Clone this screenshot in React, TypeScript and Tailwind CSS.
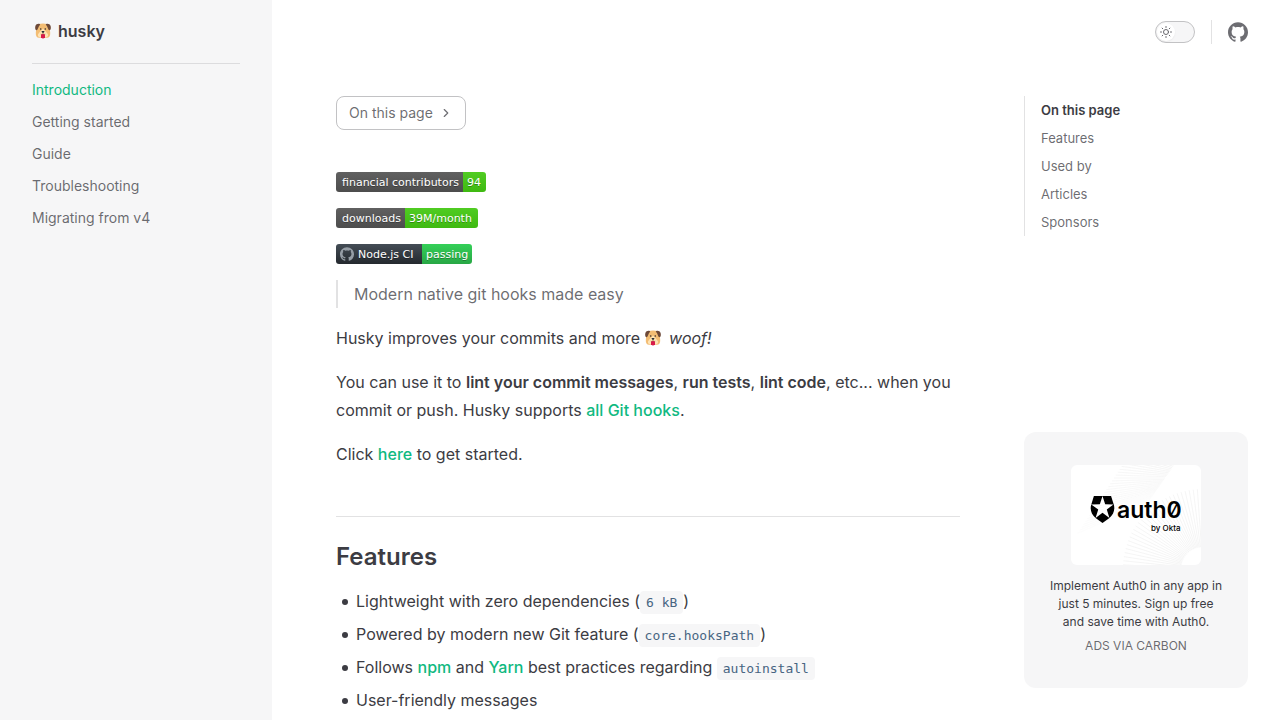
import React, { useState } from "react";
import { SiAuth0, SiGithub } from "react-icons/si";

const sidebarLinks = ["Introduction", "Getting started", "Guide", "Troubleshooting", "Migrating from v4"];
const outline = ["Features", "Used by", "Articles", "Sponsors"];

function DogFace({ className }: { className: string }) {
  return (
    <svg viewBox="0 0 16 16" className={className} role="img" aria-label="dog face">
      <path d="M3.500 1.200C6 .4 10 .4 12.500 1.200C14.500 3 15 7 15.200 10c.2 3-1 4.600-3.200 4.800H4C1.800 14.600.6 13 .8 10C1 7 1.500 3 3.500 1.200z" fill="#f3bd74" />
      <path d="M8 5.500C6.300 7 5 9 3.600 10.500c-1.300 1.500-.6 3.700 1.400 3.700h6c2 0 2.700-2.200 1.400-3.700C11 9 9.700 7 8 5.500z" fill="#ffe3b3" />
      <path d="M4.800.9C3 .3 1 1 .4 3C-.1 5 .2 7 1.500 7.200C3.300 7.200 3 3.400 5.200 1.800zM11.200.9C13 .3 15 1 15.600 3c.5 2 .2 4-1.100 4.200C12.700 7.200 13 3.400 10.800 1.800z" fill="#6d4938" />
      <circle cx="5.700" cy="6" r=".8" fill="#332b2b" />
      <circle cx="10.300" cy="6" r=".8" fill="#332b2b" />
      <path d="M6.500 8h3L8.800 9.800H7.200z" fill="#292f33" />
      <path d="M8 9.500v1.600M5.800 11.200Q7 12 8 11.200Q9 12 10.200 11.200" stroke="#6b4c35" strokeWidth=".6" fill="none" />
      <path d="M6 11.700Q8 10.400 10 11.700v2.500Q8 17 6 14.200z" fill="#d81b4a" />
    </svg>
  );
}

function Badge({ label, value, labelClass, valueClass, icon }: {
  label: string; value: string; labelClass: string; valueClass: string; icon?: boolean;
}) {
  return (
    <a
      href="#"
      className="flex h-5 w-fit overflow-hidden rounded-[3px] font-['DejaVu_Sans',sans-serif] text-[11px] leading-[18px] whitespace-nowrap text-white [text-shadow:0_1px_0_rgba(1,1,1,0.3)]"
    >
      <span className={`flex gap-1 bg-linear-to-b ${labelClass}`}>
        {icon && <SiGithub className="mt-[3px] size-3.5 shrink-0 text-[#959da5]" />}
        <span className="pt-0.5">{label}</span>
      </span>
      <span className={`bg-linear-to-b pt-0.5 pl-1 ${valueClass}`}>{value}</span>
    </a>
  );
}

function Link({ children }: { children: React.ReactNode }) {
  return <a href="#" className="font-medium text-[#10b981]">{children}</a>;
}

function Code({ children }: { children: React.ReactNode }) {
  return (
    <code className="rounded bg-[#f6f6f7] px-1.5 py-1 font-['DejaVu_Sans_Mono',monospace] text-[13px] leading-4 text-[#476582]">
      {children}
    </code>
  );
}

function Item({ children }: { children: React.ReactNode }) {
  return (
    <li className="flex items-center gap-2 pl-1.5">
      <span className="size-1.5 shrink-0 rounded-full bg-[#3c3c43]" />
      <span>{children}</span>
    </li>
  );
}

function AdArtwork() {
  const rays = Array.from({ length: 30 }, (_, i) => i);
  return (
    <svg viewBox="0 0 130 100" className="h-[100px] w-[130px] rounded-md bg-white" role="img" aria-label="auth0 by Okta">
      <g stroke="#efefef" strokeWidth=".6">
        {rays.map((i) => (
          <line key={`u${i}`} x1={103 - i * 0.9} y1={i * 1.3} x2={62 - i * 1.9} y2={-16 + i * 2.9} opacity={1 - i / 36} />
        ))}
        {rays.map((i) => {
          const a = (i / 29) * 1.5;
          return <line key={`l${i}`} x1={132 - Math.cos(a) * 22} y1={104 - Math.sin(a) * 22} x2={132 - Math.cos(a) * 80} y2={104 - Math.sin(a) * 80} />;
        })}
      </g>
      <SiAuth0 x="18" y="31" size={27} color="#000" />
      <text x="46" y="53" fontSize="23" fontWeight="600" className="font-['Inter',sans-serif] [font-feature-settings:'zero']">auth0</text>
      <text x="80" y="66" fontSize="8" fontWeight="500" className="font-['Inter',sans-serif]">by Okta</text>
    </svg>
  );
}

export default function App() {
  const [dark, setDark] = useState(false);
  return (
    <div className="flex min-h-screen bg-white font-['Inter',sans-serif] text-base text-[#3c3c43]">
      <aside className="w-[272px] shrink-0 bg-[#f6f6f7] px-8">
        <a href="#" className="flex h-16 items-center border-b border-[#dcdcde] pb-px font-semibold">
          <DogFace className="mr-[7px] ml-[3px] size-4" />
          <span>husky</span>
        </a>
        <nav aria-label="Sidebar" className="flex flex-col pt-2.5 text-sm">
          {sidebarLinks.map((name, i) => (
            <a key={name} href="#" className={`py-1 leading-6 ${i === 0 ? "text-[#10b981]" : "text-[#3c3c43]/75"}`}>{name}</a>
          ))}
        </nav>
      </aside>

      <div className="flex min-w-0 grow flex-col">
        <header className="flex h-16 shrink-0 items-center justify-end px-8 pb-px">
          <button
            type="button"
            role="switch"
            aria-checked={dark}
            aria-label="toggle dark mode"
            onClick={() => setDark(!dark)}
            className="flex h-[22px] w-10 items-center rounded-full border border-[#c2c2c4] bg-[#f6f6f7] px-px"
          >
            <span className="flex size-[18px] items-center justify-center rounded-full bg-white shadow-xs">
              <svg viewBox="0 0 24 24" className="size-3" fill="none" stroke="#66666c" strokeWidth="2" strokeLinecap="round">
                <circle cx="12" cy="12" r="5" />
                <path d="M12 1v2M12 21v2M1 12h2M21 12h2M4.200 4.200l1.400 1.400M18.400 18.400l1.400 1.400M4.200 19.800l1.400-1.400M18.400 5.600l1.400-1.400" />
              </svg>
            </span>
          </button>
          <span className="mx-4 h-6 w-px bg-[#e2e2e3]" />
          <a href="#" aria-label="GitHub"><SiGithub className="size-5 text-[#3c3c43]/75" /></a>
        </header>

        <div className="flex grow gap-16 pt-8 pr-8 pl-16">
          <main className="min-w-0 flex-1">
            <button type="button" className="flex items-center gap-1.5 rounded-lg border border-[#c2c2c4] px-3 py-1 text-sm leading-6 text-[#3c3c43]/75">
              On this page
              <svg viewBox="0 0 24 24" className="size-3.5" fill="none" stroke="currentColor" strokeWidth="2" strokeLinecap="round" strokeLinejoin="round">
                <path d="m9 18 6-6-6-6" />
              </svg>
            </button>

            <div className="mt-[42px] flex flex-col gap-4 leading-7">
              <Badge label="financial contributors" value="94" labelClass="w-[127px] pl-1.5 from-[#606060] to-[#4d4d4d]" valueClass="w-[23px] from-[#50cc22] to-[#3fb911]" />
              <Badge label="downloads" value="39M/month" labelClass="w-[69px] pl-1.5 from-[#606060] to-[#4d4d4d]" valueClass="w-[73px] from-[#50cc22] to-[#3fb911]" />
              <Badge icon label="Node.js CI" value="passing" labelClass="w-[86px] pl-1 from-[#444d56] to-[#24292e]" valueClass="w-[50px] from-[#34d058] to-[#28a745]" />
              <blockquote className="border-l-2 border-[#e2e2e3] pl-4 text-[#3c3c43]/75">Modern native git hooks made easy</blockquote>
              <p>
                Husky improves your commits and more <DogFace className="mr-1 inline-block size-4 align-[-2px]" /> <em>woof!</em>
              </p>
              <p>
                You can use it to <strong className="font-semibold">lint your commit messages</strong>, <strong className="font-semibold">run tests</strong>,{" "}
                <strong className="font-semibold">lint code</strong>, etc... when you commit or push. Husky supports <Link>all Git hooks</Link>.
              </p>
              <p>Click <Link>here</Link> to get started.</p>
            </div>

            <h2 className="mt-12 border-t border-[#e2e2e3] pt-6 text-2xl leading-8 font-semibold">Features</h2>
            <ul className="mt-4 flex flex-col gap-2 leading-[25px]">
              <Item>Lightweight with zero dependencies (<Code>6 kB</Code>)</Item>
              <Item>Powered by modern new Git feature (<Code>core.hooksPath</Code>)</Item>
              <Item>Follows <Link>npm</Link> and <Link>Yarn</Link> best practices regarding <Code>autoinstall</Code></Item>
              <Item>User-friendly messages</Item>
            </ul>
          </main>

          <aside className="flex w-56 shrink-0 flex-col pb-8">
            <nav aria-label="On this page" className="flex flex-col border-l border-[#e2e2e3] pl-4 text-[13px] leading-7">
              <h2 className="font-semibold">On this page</h2>
              {outline.map((name) => (
                <a key={name} href="#" className="text-[#3c3c43]/75">{name}</a>
              ))}
            </nav>
            <div className="mt-auto flex min-h-64 flex-col items-center justify-center rounded-xl bg-[#f6f6f7] px-6 text-center text-xs leading-[18px]">
              <AdArtwork />
              <a href="#" className="mt-3">Implement Auth0 in any app in just 5 minutes. Sign up free and save time with Auth0.</a>
              <a href="#" className="mt-1.5 text-[#3c3c43]/75 uppercase">ads via Carbon</a>
            </div>
          </aside>
        </div>
      </div>
    </div>
  );
}
